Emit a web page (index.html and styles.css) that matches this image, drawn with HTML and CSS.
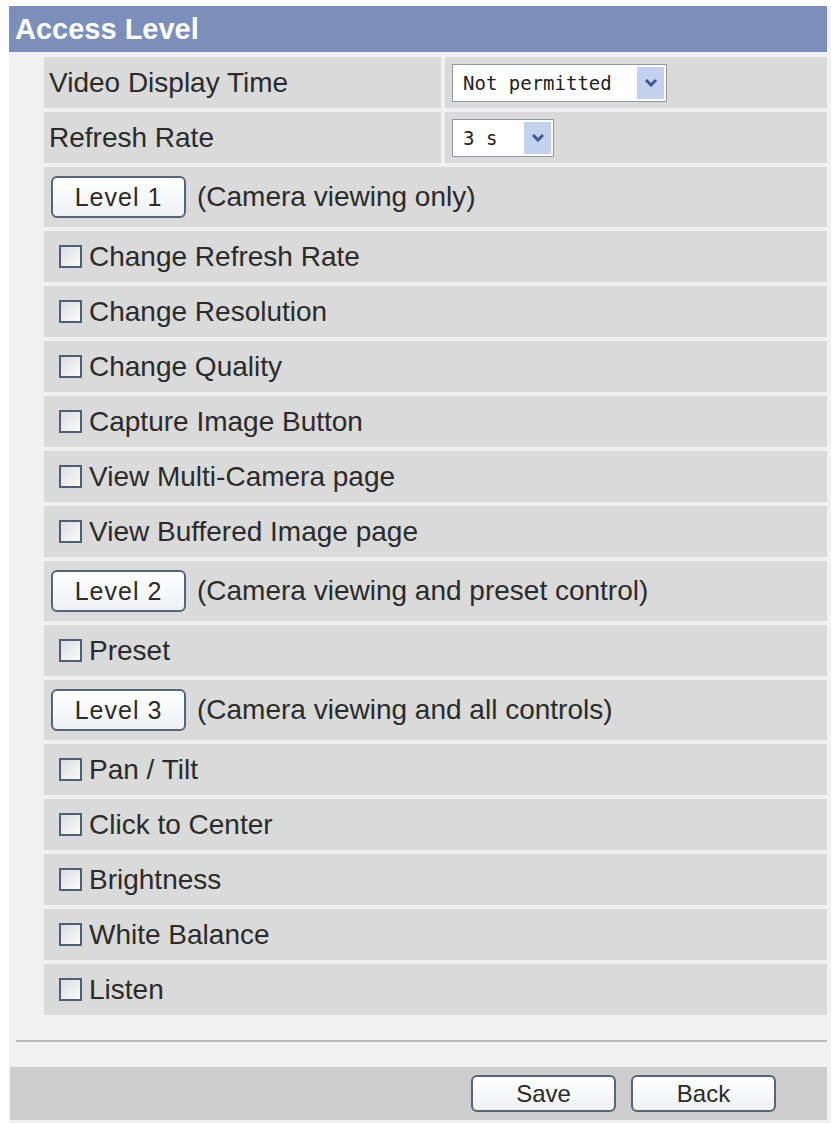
FILE: index.html
```html
<!DOCTYPE html>
<html lang="en">
<head>
    <meta charset="UTF-8">
    <title>Access Level</title>
    <link rel="stylesheet" href="styles.css">
</head>
<body>
    <div class="page">
        <div class="title-bar">Access Level</div>
        <form class="rows" onsubmit="return false;">
            <div class="row split">
                <div class="cell label">Video Display Time</div>
                <div class="cell">
                    <div class="select wide">
                        <select>
                            <option>Not permitted</option>
                            <option>1 min</option>
                            <option>Unlimited</option>
                        </select>
                        <span class="arrow"><svg width="14" height="9" viewBox="0 0 14 9"><path d="M2 2 L7 7 L12 2" fill="none" stroke="#3d5a96" stroke-width="3"/></svg></span>
                    </div>
                </div>
            </div>
            <div class="row split">
                <div class="cell label">Refresh Rate</div>
                <div class="cell">
                    <div class="select narrow">
                        <select>
                            <option>3 s</option>
                            <option>5 s</option>
                            <option>10 s</option>
                        </select>
                        <span class="arrow"><svg width="14" height="9" viewBox="0 0 14 9"><path d="M2 2 L7 7 L12 2" fill="none" stroke="#3d5a96" stroke-width="3"/></svg></span>
                    </div>
                </div>
            </div>

            <div class="row level"><button type="button" class="btn level-btn">Level 1</button><span>(Camera viewing only)</span></div>
            <label class="row check"><input type="checkbox" class="chk">Change Refresh Rate</label>
            <label class="row check"><input type="checkbox" class="chk">Change Resolution</label>
            <label class="row check"><input type="checkbox" class="chk">Change Quality</label>
            <label class="row check"><input type="checkbox" class="chk">Capture Image Button</label>
            <label class="row check"><input type="checkbox" class="chk">View Multi-Camera page</label>
            <label class="row check"><input type="checkbox" class="chk">View Buffered Image page</label>

            <div class="row level"><button type="button" class="btn level-btn">Level 2</button><span>(Camera viewing and preset control)</span></div>
            <label class="row check"><input type="checkbox" class="chk">Preset</label>

            <div class="row level"><button type="button" class="btn level-btn">Level 3</button><span>(Camera viewing and all controls)</span></div>
            <label class="row check"><input type="checkbox" class="chk">Pan / Tilt</label>
            <label class="row check"><input type="checkbox" class="chk">Click to Center</label>
            <label class="row check"><input type="checkbox" class="chk">Brightness</label>
            <label class="row check"><input type="checkbox" class="chk">White Balance</label>
            <label class="row check"><input type="checkbox" class="chk">Listen</label>
        </form>
        <hr class="divider">
        <div class="actions">
            <button type="button" class="btn action-btn">Save</button>
            <button type="button" class="btn action-btn">Back</button>
        </div>
    </div>
</body>
</html>
```

FILE: styles.css
```css
body {
    margin: 0;
    background: #fff;
    font-family: "Liberation Sans", Arial, sans-serif;
    color: #2b2b2b;
}
.page {
    margin: 6px 0 0 9px;
    width: 818px;
    padding: 0 4px 4px 0;
    background: #f1f1f1;
}
.title-bar {
    height: 46px;
    line-height: 46px;
    padding-left: 6px;
    background: #7b8fba;
    color: #fff;
    font-weight: bold;
    font-size: 29px;
}
.rows {
    display: flex;
    flex-direction: column;
    gap: 4px;
    margin: 5px 0 0 35px;
}
.row {
    display: flex;
    align-items: center;
    height: 51px;
    background: #dadada;
    font-size: 28px;
}
.row.split {
    display: grid;
    grid-template-columns: 397px 1fr;
    gap: 4px;
    background: #f1f1f1;
}
.cell {
    display: flex;
    align-items: center;
    height: 100%;
    background: #dadada;
    padding-left: 7px;
}
.cell.label { padding-left: 5px; }
.row.level {
    height: 60px;
    padding-left: 7px;
    gap: 11px;
}
.row.check {
    padding-left: 15px;
    cursor: pointer;
}

/* select boxes */
.select {
    position: relative;
    height: 38px;
    box-sizing: border-box;
    border: 1px solid #8e99a8;
    background: #fff;
}
.select.wide { width: 215px; }
.select.narrow { width: 102px; }
.select select {
    appearance: none;
    -webkit-appearance: none;
    border: none;
    outline: none;
    background: transparent;
    width: 100%;
    height: 100%;
    padding: 0 0 0 10px;
    font-family: "DejaVu Sans Mono", "Liberation Mono", monospace;
    font-size: 19px;
    color: #222;
}
.select .arrow {
    position: absolute;
    top: 2px;
    right: 2px;
    bottom: 2px;
    width: 27px;
    background: #c3d1ee;
    display: flex;
    align-items: center;
    justify-content: center;
    pointer-events: none;
}

/* checkbox */
.chk {
    appearance: none;
    -webkit-appearance: none;
    width: 23px;
    height: 23px;
    margin: 0 7px 0 0;
    box-sizing: border-box;
    border: 2px solid #4f5f75;
    background: linear-gradient(135deg, #d9dde5, #fbfbf6);
}

/* buttons */
.btn {
    font-family: "Liberation Sans", Arial, sans-serif;
    color: #2b2b2b;
    border: 2px solid #56657a;
    border-radius: 6px;
    background: linear-gradient(#ffffff, #eef0f2);
    cursor: pointer;
}
.level-btn {
    width: 135px;
    height: 42px;
    font-size: 25px;
    letter-spacing: 1px;
    padding: 0;
}
.divider {
    border: none;
    border-top: 2px solid #b7b7b7;
    margin: 25px 0 0 7px;
}
.actions {
    display: flex;
    justify-content: flex-end;
    gap: 15px;
    height: 53px;
    align-items: center;
    margin: 25px 0 0 1px;
    padding-right: 51px;
    background: #cdcdcd;
}
.action-btn {
    width: 145px;
    height: 37px;
    font-size: 24px;
    padding: 0;
}
```
